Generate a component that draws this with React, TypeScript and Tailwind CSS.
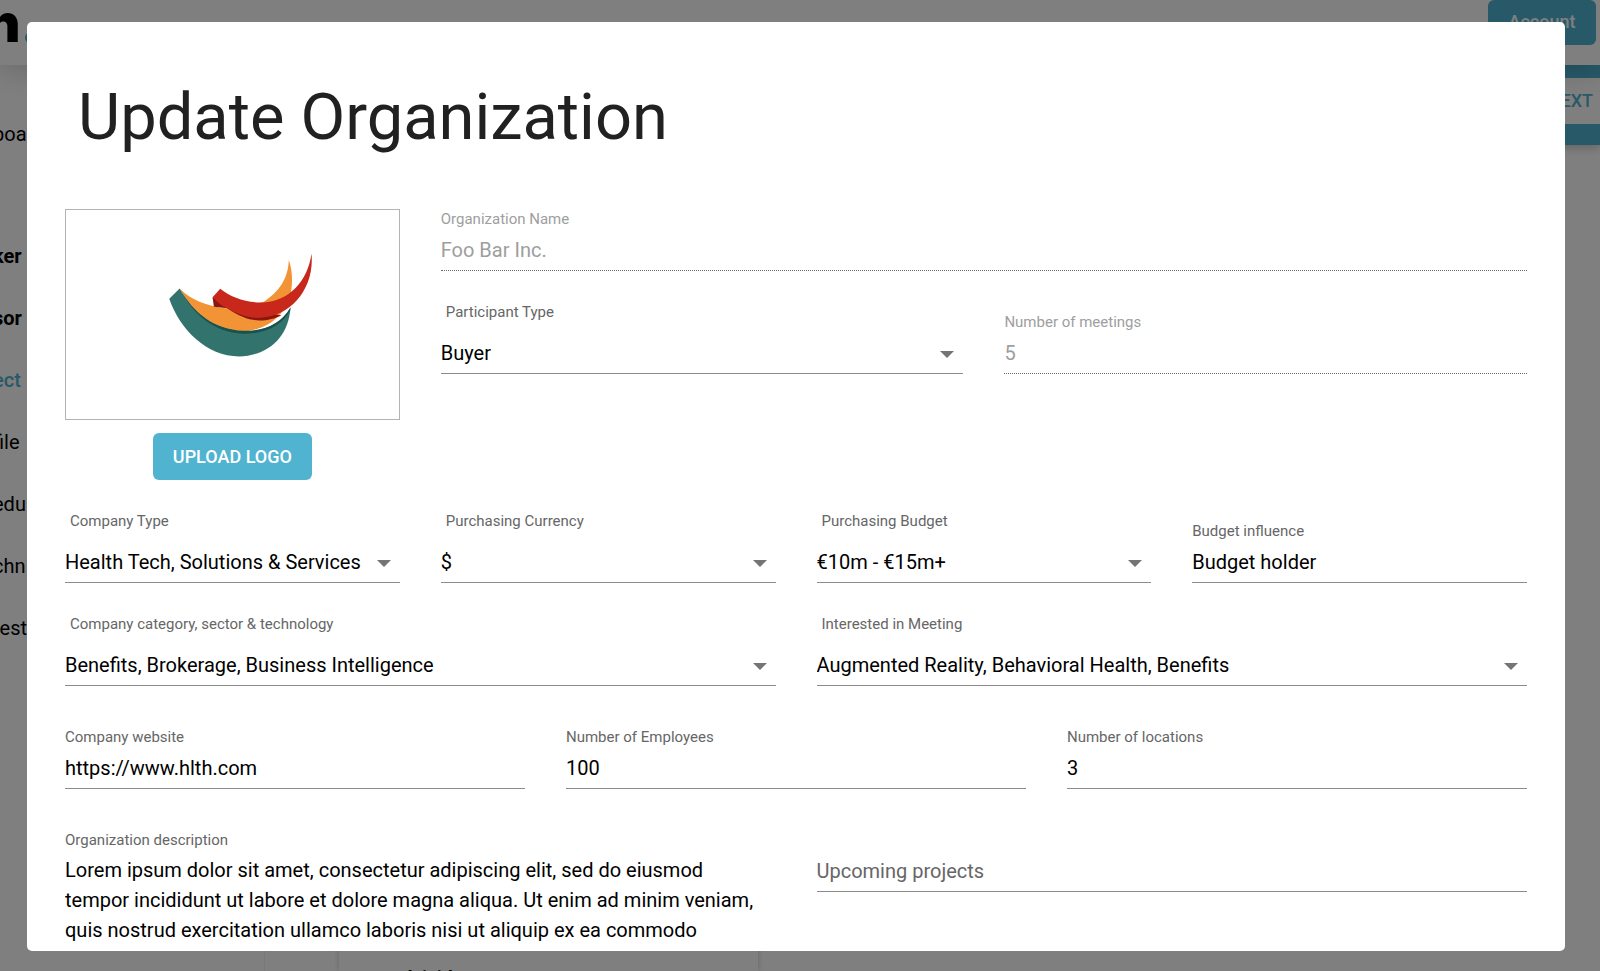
import type { ReactNode } from 'react';

const navItems = [
  { label: 'ker', tone: 'font-bold text-black' },
  { label: 'sor', tone: 'font-bold text-black' },
  { label: 'ect', tone: 'font-medium text-[#50b3d0]' },
  { label: 'file', tone: 'text-black' },
  { label: 'edu', tone: 'text-black' },
  { label: 'chn', tone: 'text-black' },
  { label: 'rest', tone: 'text-black' },
];

const description = [
  'Lorem ipsum dolor sit amet, consectetur adipiscing elit, sed do eiusmod',
  'tempor incididunt ut labore et dolore magna aliqua. Ut enim ad minim veniam,',
  'quis nostrud exercitation ullamco laboris nisi ut aliquip ex ea commodo',
].join('\n');

type FieldProps = {
  id: string;
  label: string;
  value?: string;
  disabled?: boolean;
};

function TextField({ id, label, value, disabled = false }: FieldProps) {
  return (
    <div className="flex min-w-0 flex-1 flex-col">
      <label htmlFor={id} className={disabled ? 'text-[15px] leading-5 text-[#9e9e9e]' : 'text-[15px] leading-5 text-[#666666]'}>
        {label}
      </label>
      <input
        id={id}
        defaultValue={value}
        disabled={disabled}
        className={
          disabled
            ? 'h-[42px] w-full border-b border-dotted border-[#6b6b6b] bg-transparent text-[20px] text-[#9e9e9e] outline-none'
            : 'h-[42px] w-full border-b border-[#8c8c8c] bg-transparent text-[20px] text-black outline-none'
        }
      />
    </div>
  );
}

function SelectField({ id, label, value }: FieldProps) {
  return (
    <div className="flex min-w-0 flex-1 flex-col gap-[10px]">
      <label htmlFor={id} className="pl-[5px] text-[15px] leading-5 text-[#666666]">
        {label}
      </label>
      <div className="relative">
        <select
          id={id}
          defaultValue={value}
          className="h-[42px] w-full appearance-none border-b border-[#8c8c8c] bg-transparent pr-7 text-[20px] text-black outline-none"
        >
          <option value={value}>{value}</option>
        </select>
        <svg viewBox="0 0 14 7" className="pointer-events-none absolute top-[19px] right-[9px] h-[7px] w-[14px]" aria-hidden="true">
          <path d="M0 0h14L7 7z" fill="#757575" />
        </svg>
      </div>
    </div>
  );
}

function Row({ children }: { children: ReactNode }) {
  return <div className="flex items-end gap-[41px]">{children}</div>;
}

function CompanyLogo() {
  return (
    <svg viewBox="-222 -57 999 624" className="h-full w-full" role="img" aria-label="Company logo">
      <path d="M447 91C460 130 458 165 452 196C436 255 385 306 300 306C215 300 155 245 119 177C150 208 195 230 262 237L370 218C415 190 445 150 447 91Z" fill="#f29436" />
      <path d="M335 303C385 292 405 272 425 258L452 234L452 246C420 290 370 310 325 308Z" fill="#ffffff" />
      <path d="M119 177L88 208C120 300 200 381 298 381C385 378 446 325 452 234C425 282 375 307 310 306C220 300 160 250 119 177Z" fill="#33736e" />
      <path d="M119 177C160 250 220 300 310 304C375 305 425 282 452 234L451 243C425 290 375 313 310 313C220 308 160 255 119 177Z" fill="#17524e" />
      <path d="M218 203L222 232L262 236C300 262 330 272 358 273C385 273 405 267 425 258L340 240Z" fill="#8c150f" />
      <path d="M241 178L218 203C232 218 247 230 264 238C300 258 330 266 360 265C455 262 525 175 515 72C505 150 450 219 362 219C315 219 270 202 241 178Z" fill="#c8281c" />
    </svg>
  );
}

export default function App() {
  return (
    <div className="relative h-screen overflow-hidden bg-white font-['Roboto','Liberation_Sans',sans-serif]">
      <div className="flex h-full flex-col" aria-hidden="true">
        <header className="relative z-10 flex h-[65px] shrink-0 items-start justify-between bg-white pr-1 shadow-[0_4px_32px_rgba(0,0,0,0.2)]">
          <div className="-ml-[14px] flex h-full items-start font-['Inter','Roboto',sans-serif] text-[53px] leading-[47px] font-black text-black">
            n<span className="text-[#50b3d0]">.</span>
          </div>
          <div className="flex h-[45px] w-[108px] items-start justify-center rounded-md bg-[#50b3d0] pt-2 text-[18px] leading-7 font-medium text-white">
            Account
          </div>
        </header>
        <div className="flex min-h-0 flex-1">
          <aside className="flex w-[265px] shrink-0 flex-col border-r border-[#f0f0f0] pt-[38px] text-[20px] leading-[62px]">
            <div className="-ml-[7px] text-black">boa</div>
            <div className="-ml-[7px] flex flex-col pt-[60px]">
              {navItems.map((item) => (
                <div key={item.label} className={item.tone}>
                  {item.label}
                </div>
              ))}
            </div>
          </aside>
          <main className="flex flex-1 flex-col justify-between">
            <div className="flex h-20 shrink-0 flex-col bg-[#50b3d0] pt-[13px] shadow-[0_2px_10px_rgba(0,0,0,0.25)]">
              <div className="h-[46px] bg-white pr-[7px] text-right text-[18px] leading-[46px] font-medium text-[#50b3d0]">NEXT</div>
            </div>
            <div className="ml-[74px] h-[60px] w-[419px] shrink-0 pt-[55px] pl-[50px] text-[19px] leading-6 font-bold text-black shadow-[0_0_6px_rgba(0,0,0,0.2)]">
              Advisides
            </div>
          </main>
        </div>
      </div>

      <div className="absolute inset-0 z-20 flex bg-black/50 pt-[22px] pr-[35px] pb-[20px] pl-[27px]">
        <form
          role="dialog"
          aria-labelledby="dialog-title"
          className="flex min-w-0 flex-1 flex-col overflow-hidden rounded-[5px] bg-white px-[38px]"
        >
          <h1 id="dialog-title" className="px-[13px] pt-[56px] pb-[53px] text-[65px] leading-[78px] text-[#212121]">
            Update Organization
          </h1>

          <div className="flex flex-col gap-[31px]">
            <div className="grid grid-cols-4 gap-[41px]">
              <div className="flex flex-col items-center gap-[13px]">
                <div className="h-[211px] w-full border border-[#b3b3b3]">
                  <CompanyLogo />
                </div>
                <button type="button" className="h-[47px] rounded-md bg-[#50b3d0] px-[20px] text-[18px] font-medium text-white">
                  UPLOAD LOGO
                </button>
              </div>
              <div className="col-span-3 flex flex-col gap-[31px]">
                <Row>
                  <TextField id="organization-name" label="Organization Name" value="Foo Bar Inc." disabled />
                </Row>
                <Row>
                  <SelectField id="participant-type" label="Participant Type" value="Buyer" />
                  <TextField id="meetings" label="Number of meetings" value="5" disabled />
                </Row>
              </div>
            </div>

            <Row>
              <SelectField id="company-type" label="Company Type" value="Health Tech, Solutions & Services" />
              <SelectField id="currency" label="Purchasing Currency" value="$" />
              <SelectField id="budget" label="Purchasing Budget" value="€10m - €15m+" />
              <TextField id="influence" label="Budget influence" value="Budget holder" />
            </Row>

            <Row>
              <SelectField id="category" label="Company category, sector & technology" value="Benefits, Brokerage, Business Intelligence" />
              <SelectField id="interests" label="Interested in Meeting" value="Augmented Reality, Behavioral Health, Benefits" />
            </Row>
          </div>

          <div className="flex flex-col gap-[41px] pt-[41px]">
            <Row>
              <TextField id="website" label="Company website" value="https://www.hlth.com" />
              <TextField id="employees" label="Number of Employees" value="100" />
              <TextField id="locations" label="Number of locations" value="3" />
            </Row>

            <div className="flex items-start gap-[41px]">
              <div className="flex min-w-0 flex-1 flex-col gap-[5px]">
                <label htmlFor="description" className="text-[15px] leading-5 text-[#666666]">
                  Organization description
                </label>
                <textarea
                  id="description"
                  rows={3}
                  className="w-full resize-none overflow-hidden bg-transparent text-[20px] leading-[30px] text-black outline-none"
                  defaultValue={description}
                />
              </div>
              <div className="flex min-w-0 flex-1 pt-5">
                <input
                  aria-label="Upcoming projects"
                  placeholder="Upcoming projects"
                  className="h-[42px] w-full border-b border-[#8c8c8c] bg-transparent text-[20px] outline-none placeholder:text-[#666666]"
                />
              </div>
            </div>
          </div>
        </form>
      </div>
    </div>
  );
}
